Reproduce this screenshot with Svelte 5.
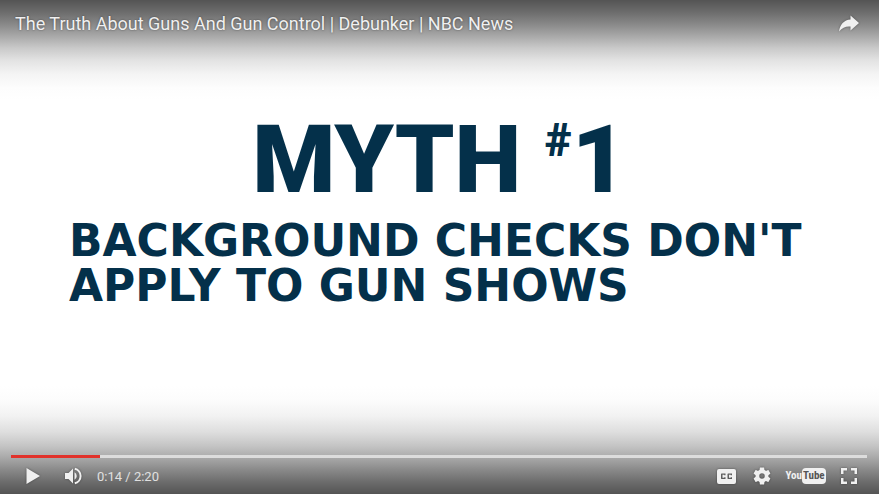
<script>
  let playing = $state(false);
  let muted = $state(false);
  let position = $state(14);
  const duration = 140;
  const clock = (s) => `${Math.floor(s / 60)}:${String(s % 60).padStart(2, '0')}`;
  // the handle-less track fills a little ahead of the clock
  let played = $derived(Math.min(100, ((position + 0.6) / duration) * 100));
</script>

<main class="player">
  <header class="top">
    <a class="title" href="#watch">The Truth About Guns And Gun Control | Debunker | NBC News</a>
    <button class="icon" aria-label="Share">
      <svg width="22" height="18" viewBox="0 0 22 18"><path d="M12.500 0.500 21 8 12.500 15.500V11.500C8 11 4.500 12.500 1 16.500 2 9.500 6 5 12.500 4.500Z" /></svg>
    </button>
  </header>

  <section class="frame">
    <h1>MYTH <sup>#</sup>1</h1>
    <p>BACKGROUND CHECKS DON'T<br />APPLY TO GUN SHOWS</p>
  </section>

  <footer class="bottom">
    <input
      class="seek"
      type="range"
      min="0"
      max={duration}
      bind:value={position}
      aria-label="Seek"
      style="--played: {played}%"
    />
    <div class="controls">
      <button class="icon play" aria-label="Play" onclick={() => (playing = !playing)}>
        <svg width="14" height="18" viewBox="0 0 14 18"><path d="M0.500 1 14 9 0.500 17Z" /></svg>
      </button>
      <button class="icon volume" aria-label="Mute" onclick={() => (muted = !muted)}>
        <svg width="18" height="18" viewBox="0 0 18 18">
          <path d="M1 6H4.500L9 1.500V16.500L4.500 12H1Z" />
          <path d="M10.500 5.200A4.300 4.300 0 0 1 10.500 12.800Z" />
          <path class="wave" d="M10.800 1.700A7.500 7.500 0 0 1 10.800 16.300" />
        </svg>
      </button>
      <span class="time">{clock(position)} / {clock(duration)}</span>
      <div class="right">
        <button class="icon" aria-label="Subtitles">
          <svg width="19" height="15" viewBox="0 0 19 15">
            <path fill-rule="evenodd" d="M2 0H17Q19 0 19 2V13Q19 15 17 15H2Q0 15 0 13V2Q0 0 2 0ZM4.500 4.500 4 5V9.500L4.500 10H8.500V8.300H7.200V8.700H5.500V5.800H7.200V6.200H8.500V4.500ZM11 4.500 10.500 5V9.500L11 10H15V8.300H13.700V8.700H12V5.800H13.700V6.200H15V4.500Z" />
          </svg>
        </button>
        <button class="icon" aria-label="Settings">
          <svg width="18" height="18" viewBox="1.500 1.500 21 21"><path d="M19.430 12.980c.04-.32.07-.64.07-.98s-.03-.66-.07-.98l2.110-1.650c.19-.15.24-.42.12-.64l-2-3.460c-.12-.22-.39-.3-.61-.22l-2.490 1c-.52-.4-1.080-.73-1.690-.98l-.38-2.650C14.460 2.180 14.250 2 14 2h-4c-.25 0-.46.18-.49.42l-.38 2.650c-.61.25-1.170.59-1.690.98l-2.490-1c-.23-.09-.49 0-.61.22l-2 3.460c-.13.22-.07.49.12.64l2.110 1.650c-.04.32-.07.65-.07.98s.03.66.07.98l-2.110 1.650c-.19.15-.24.42-.12.64l2 3.460c.12.22.39.3.61.22l2.490-1c.52.4 1.080.73 1.690.98l.38 2.650c.03.24.24.42.49.42h4c.25 0 .46-.18.49-.42l.38-2.650c.61-.25 1.170-.59 1.690-.98l2.490 1c.23.09.49 0 .61-.22l2-3.460c.12-.22.07-.49-.12-.64l-2.110-1.650zM12 15.200a3.200 3.200 0 1 1 0-6.400 3.200 3.200 0 0 1 0 6.400z" /></svg>
        </button>
        <a class="brand" href="#youtube">You<span>Tube</span></a>
        <button class="icon" aria-label="Full screen">
          <svg width="18" height="18" viewBox="0 0 18 18"><path d="M1 1H7V3.500H3.500V7H1ZM11 1H17V7H14.500V3.500H11ZM1 11H3.500V14.500H7V17H1ZM14.500 11H17V17H11V14.500H14.500Z" /></svg>
        </button>
      </div>
    </div>
  </footer>
</main>

<style>
  :global(body) {
    margin: 0;
  }
  .player {
    display: flex;
    flex-direction: column;
    min-height: 100vh;
    font-family: Roboto, "Liberation Sans", sans-serif;
    color: #f0f0f0;
    background:
      linear-gradient(#545454 0, #6c6c6c 12px, #888 24px, #a8a8a8 36px, #c9c9c9 48px, #e2e2e2 60px, #f4f4f4 74px, #fdfdfd 88px, transparent 100px) top / 100% 100px no-repeat,
      linear-gradient(to top, #545454 0, #6c6c6c 12px, #898989 24px, #a8a8a8 36px, #c4c4c4 48px, #dedede 62px, #f2f2f2 78px, #fcfcfc 94px, transparent 108px) bottom / 100% 108px no-repeat,
      #fff;
  }
  .top {
    display: flex;
    justify-content: space-between;
    align-items: center;
    height: 48px;
    padding: 0 12px 0 15px;
  }
  .title {
    color: inherit;
    font-size: 18px;
    line-height: 24px;
    text-decoration: none;
    text-shadow: 0 0 2px rgba(0, 0, 0, 0.5);
  }
  .icon {
    display: flex;
    align-items: center;
    justify-content: center;
    width: 36px;
    height: 36px;
    padding: 0;
    border: 0;
    background: none;
    color: inherit;
    cursor: pointer;
  }
  svg {
    display: block;
    fill: currentColor;
    filter: drop-shadow(0 0 1px rgba(0, 0, 0, 0.4));
  }
  .wave {
    fill: none;
    stroke: currentColor;
    stroke-width: 2;
  }
  .frame {
    flex: 1;
    padding: 62px 69px 0;
    color: #04304a;
  }
  h1 {
    margin: 0;
    font: 900 95px/100px Roboto, sans-serif;
    text-align: center;
  }
  sup {
    font-size: 46px;
    line-height: 1;
    vertical-align: 36px;
  }
  p {
    margin: 8px 0 0;
    font: 700 44px/45px "DejaVu Sans", sans-serif;
    white-space: nowrap;
  }
  .bottom {
    padding: 0 12px 0 11px;
  }
  .seek {
    display: block;
    appearance: none;
    width: 100%;
    height: 3px;
    margin: 0;
    background: linear-gradient(to right, #e1322b var(--played), #dcdcdc var(--played));
    cursor: pointer;
  }
  .seek::-webkit-slider-thumb {
    appearance: none;
    width: 0;
    height: 0;
  }
  .controls {
    display: flex;
    align-items: center;
    height: 36px;
  }
  .play {
    width: 44px;
  }
  .time {
    margin-left: 6px;
    font-size: 13px;
    color: #e0e0e0;
  }
  .right {
    display: flex;
    align-items: center;
    margin-left: auto;
  }
  .brand {
    display: flex;
    align-items: center;
    justify-content: center;
    width: 51px;
    font: 700 11px/16px "Liberation Sans Narrow", "Roboto Condensed", sans-serif;
    color: inherit;
    text-decoration: none;
  }
  .brand span {
    padding: 0 1px;
    border-radius: 4px;
    background: #f0f0f0;
    color: #555;
  }
</style>
